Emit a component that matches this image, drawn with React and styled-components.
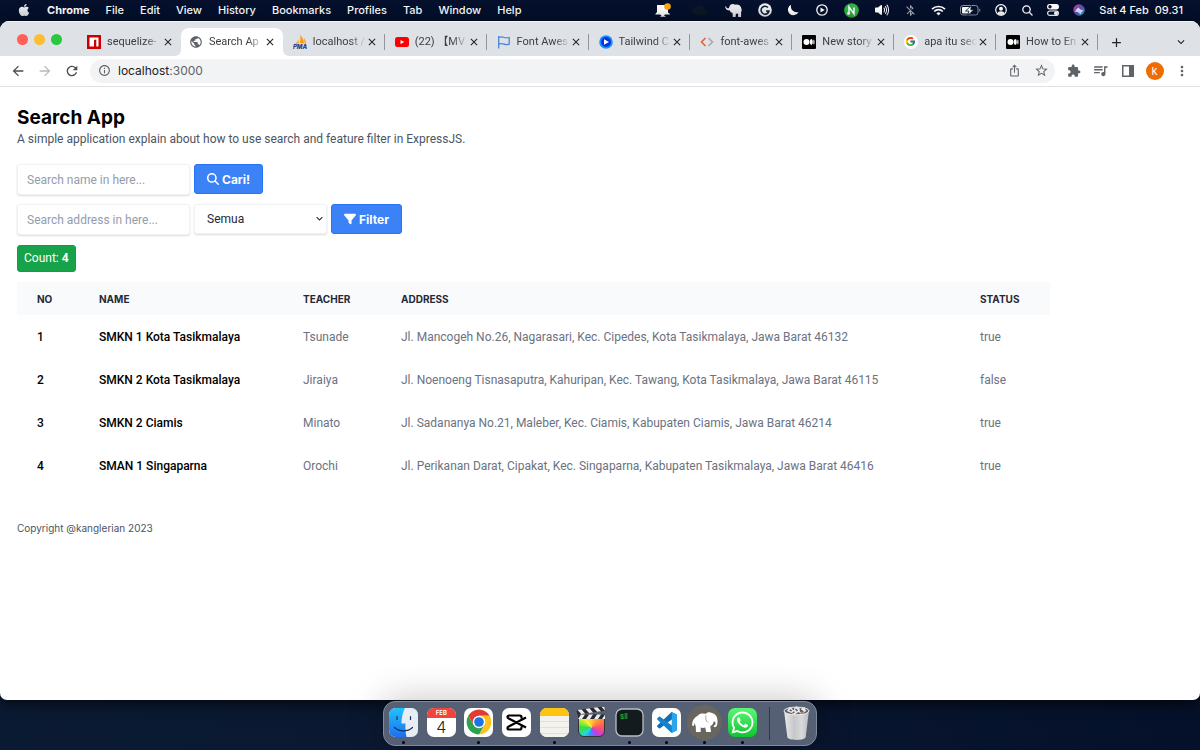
import React, { useState } from "react";
import styled, { createGlobalStyle, css } from "styled-components";
import { FaApple, FaFilter, FaMagnifyingGlass, FaWhatsapp } from "react-icons/fa6";
import { FcGoogle } from "react-icons/fc";
import { IoVolumeHigh } from "react-icons/io5";
import {
  MdAdd,
  MdArrowBack,
  MdArrowForward,
  MdBluetoothDisabled,
  MdClose,
  MdExtension,
  MdInfoOutline,
  MdIosShare,
  MdKeyboardArrowDown,
  MdMoreVert,
  MdPublic,
  MdQueueMusic,
  MdRefresh,
  MdStarBorder,
} from "react-icons/md";

const GlobalStyle = createGlobalStyle`
  * {
    box-sizing: border-box;
  }

  body {
    margin: 0;
    font-family: Inter, "Noto Sans CJK JP", sans-serif;
    font-size: 11px;
    color: #000;
  }

  button,
  input,
  select {
    font: inherit;
    margin: 0;
  }

  svg {
    display: block;
    flex: none;
  }
`;

const Desktop = styled.div`
  min-height: 100vh;
  display: flex;
  flex-direction: column;
  background: linear-gradient(90deg, #0b1a33, #0a1730 50%, #05112a);
`;

/* ---------- menu bar ---------- */

const MenuBar = styled.header`
  display: flex;
  align-items: center;
  justify-content: space-between;
  height: 21px;
  padding: 0 17px 1px 17px;
  background: #04102c;
  color: #fff;
  font-weight: 500;
`;

const Menus = styled.nav`
  display: flex;
  align-items: center;
  gap: 16px;
`;

const MenuButton = styled.button`
  padding: 0;
  border: 0;
  background: none;
  color: inherit;
  font-weight: ${(props) => (props.$bold ? 700 : 500)};
`;

const StatusArea = styled.div`
  display: flex;
  align-items: center;
  gap: 14px;
`;

const StatusItem = styled.span`
  display: flex;
  justify-content: center;
  width: ${(props) => props.$width}px;
  opacity: ${(props) => (props.$dim ? 0.6 : 1)};
`;

const Clock = styled.time`
  white-space: pre;
`;

/* ---------- browser window ---------- */

const BrowserWindow = styled.div`
  flex: 1;
  display: flex;
  flex-direction: column;
  border-radius: 9px 9px 7px 7px;
  overflow: hidden;
  background: #fff;
  box-shadow: 0 2px 16px rgba(0, 0, 0, 0.8);
`;

const TabStrip = styled.div`
  display: flex;
  align-items: stretch;
  height: 35px;
  background: #dee1e6;
  border-top: 1px solid #eff1f3;
`;

const TrafficLights = styled.div`
  display: flex;
  align-items: center;
  gap: 6px;
  width: 79px;
  padding-left: 17px;
`;

const Light = styled.button`
  width: 11px;
  height: 11px;
  padding: 0;
  border: 0;
  border-radius: 50%;
  background: ${(props) => props.$color};
`;

const TabList = styled.div`
  flex: 1;
  min-width: 0;
  display: grid;
  grid-template-columns: repeat(10, minmax(0, 1fr));
  padding-top: 6px;
`;

const activeTab = css`
  background: #fff;
  border-radius: 8px 8px 0 0;

  &::before,
  &::after {
    content: "";
    position: absolute;
    bottom: 0;
    width: 6px;
    height: 6px;
  }

  &::before {
    left: -6px;
    background: radial-gradient(circle at 0 0, transparent 6px, #fff 6px);
  }

  &::after {
    right: -6px;
    background: radial-gradient(circle at 100% 0, transparent 6px, #fff 6px);
  }
`;

const TabItem = styled.div`
  position: relative;
  display: flex;
  align-items: center;
  padding: 0 8px 0 ${(props) => (props.$divided ? 10 : 8)}px;
  color: #3c4043;
  ${(props) => props.$active && activeTab}
`;

const TabTitle = styled.span`
  flex: 1;
  min-width: 0;
  margin: 0 1px 0 6px;
  overflow: hidden;
  white-space: pre;
  font-family: Roboto, "Noto Sans CJK JP", sans-serif;
  line-height: 16px;
  mask-image: linear-gradient(90deg, #000 70%, transparent);
`;

const TabDivider = styled.span`
  position: absolute;
  right: 0;
  top: 6px;
  width: 1px;
  height: 16px;
  background: #92959a;
`;

const IconButton = styled.button`
  display: flex;
  align-items: center;
  justify-content: center;
  padding: 0;
  border: 0;
  background: none;
  color: ${(props) => props.$color || "#202124"};
  width: ${(props) => props.$width || 10}px;
`;

const StripEnd = styled.div`
  display: flex;
  align-items: center;
  justify-content: space-between;
  width: 102px;
  padding: 6px 12px 0 11px;
`;

const Toolbar = styled.div`
  display: flex;
  align-items: center;
  height: 31px;
  padding: 0 5px 1px 4px;
  border-bottom: 1px solid #dfe1e4;
`;

const AddressBar = styled.div`
  flex: 1;
  display: flex;
  align-items: center;
  gap: 7px;
  height: 24px;
  margin: 0 5px;
  padding: 0 4px 0 8px;
  border-radius: 12px;
  background: #f1f3f4;
  color: #5f6368;
`;

const Address = styled.span`
  flex: 1;
  font-size: 12px;
  color: #5f6368;

  b {
    color: #202124;
    font-weight: 400;
  }
`;

const Avatar = styled.span`
  display: flex;
  align-items: center;
  justify-content: center;
  width: 18px;
  height: 18px;
  border-radius: 50%;
  background: #ef6c00;
  color: #fff;
`;

/* ---------- page ---------- */

const Page = styled.main`
  padding: 17px;
  font-family: Roboto, sans-serif;
  font-size: 12px;
`;

const Title = styled.h1`
  margin: 0;
  font-family: Inter, sans-serif;
  font-size: 19px;
  line-height: 27px;
  font-weight: 700;
`;

const Subtitle = styled.p`
  margin: 0 0 17px;
  line-height: 16px;
  color: #4b5563;
`;

const FormRow = styled.form`
  display: flex;
  align-items: flex-start;
  gap: 4px;
  margin-bottom: 9px;
`;

const field = css`
  border: 1px solid #f1f2f4;
  border-radius: 3px;
  background: #fff;
  box-shadow: 0 1px 2px rgba(0, 0, 0, 0.14);
`;

const TextField = styled.input`
  ${field}
  width: 173px;
  height: 31px;
  padding: 0 9px;

  &::placeholder {
    color: #949cab;
    opacity: 1;
  }
`;

const SelectBox = styled.div`
  position: relative;
  width: 133px;

  svg {
    position: absolute;
    right: 1px;
    top: 8px;
    pointer-events: none;
  }
`;

const Select = styled.select`
  ${field}
  appearance: none;
  width: 100%;
  height: 30px;
  padding: 0 12px;
  color: #1f2937;
`;

const SubmitButton = styled.button`
  display: flex;
  align-items: center;
  gap: 3px;
  height: 30px;
  padding: 0 12px;
  border: 1px solid #2674f5;
  border-radius: 3px;
  background: #3b82f6;
  color: #fff;
  font-family: Inter, sans-serif;
  font-weight: 700;
`;

const CountBadge = styled.p`
  width: fit-content;
  margin: 10px 0;
  padding: 0 6px;
  border: 1px solid #159c48;
  border-radius: 3px;
  background: #16a34a;
  color: #fff;
  line-height: 25px;
`;

const TableWrap = styled.div`
  margin-right: 133px;
`;

const Table = styled.table`
  width: 100%;
  table-layout: fixed;
  border-collapse: collapse;
  text-align: left;
  color: #6b7280;

  tr {
    height: 43px;
  }

  thead tr {
    height: 33px;
    background: #f9fafb;
  }
`;

const HeadCell = styled.th`
  width: ${(props) => (props.$width ? `${props.$width}px` : "auto")};
  padding: 0 20px;
  font-family: Inter, sans-serif;
  font-size: 10px;
  font-weight: 700;
  color: #1f2937;
`;

const Cell = styled.td`
  padding: 0 20px;
  white-space: nowrap;
`;

const StrongCell = styled(Cell)`
  font-weight: 500;
  color: #000;
`;

const Footer = styled.footer`
  margin-top: 33px;
  font-family: Inter, sans-serif;
  font-size: 10px;
  line-height: 16px;
  color: #4b5563;
`;

/* ---------- dock ---------- */

const DockArea = styled.footer`
  position: relative;
  display: flex;
  justify-content: center;
  padding: 1px 0 4px;
`;

const Dock = styled.div`
  display: flex;
  align-items: center;
  width: 434px;
  height: 45px;
  padding: 0 1px;
  border: 1px solid #828b9c;
  border-radius: 12px;
  background: #566075;
  box-shadow: 0 0 36px rgba(0, 0, 0, 0.25), 0 0 1px #000;
`;

const DockApps = styled.div`
  flex: 1;
  display: grid;
  grid-template-columns: repeat(10, 1fr);
`;

const DockItem = styled.button`
  display: flex;
  flex-direction: column;
  align-items: center;
  gap: 3px;
  padding: 3px 0 0;
  border: 0;
  background: none;
`;

const RunningDot = styled.span`
  width: 3px;
  height: 3px;
  border-radius: 50%;
  background: ${(props) => (props.$on ? "#000" : "transparent")};
`;

const DockSeparator = styled.span`
  width: 1px;
  height: 33px;
  margin: 0 8px;
  background: #2f3848;
`;

const IconSlot = styled.span`
  display: flex;
  align-items: center;
  justify-content: center;
  width: 37px;
  height: 32px;
`;

const Tile = styled.span`
  position: relative;
  display: flex;
  flex-direction: column;
  align-items: center;
  justify-content: center;
  width: 29px;
  height: 29px;
  border-radius: 7px;
  overflow: hidden;
  background: ${(props) => props.$background || "#fff"};
`;

const MonthLabel = styled.span`
  align-self: stretch;
  background: #f0443c;
  color: #fff;
  font-size: 6px;
  line-height: 10px;
  font-weight: 600;
  text-align: center;
`;

const DayLabel = styled.span`
  flex: 1;
  color: #222;
  font-size: 16px;
  line-height: 19px;
  font-weight: 300;
`;

const NoteTop = styled.span`
  align-self: stretch;
  height: 8px;
  background: #fcc40f;
`;

const NoteLines = styled.span`
  align-self: stretch;
  flex: 1;
  background: repeating-linear-gradient(#f4f2ed 0 5px, #e2e0db 5px 6px);
`;

const ColorWheel = styled.span`
  width: 27px;
  height: 19px;
  margin-top: 10px;
  border: 1px solid #333;
  border-radius: 1px 1px 6px 6px;
  background: conic-gradient(#ffc83c, #ff8a3c 50deg, #ff4f6b 90deg, #c03cf0 140deg, #3c8cff 190deg, #28d8d8 225deg, #33e03c 270deg, #f4f03c 320deg, #ffc83c);
`;

/* ---------- drawings ---------- */

const NpmIcon = () => (
  <svg width="14" height="14" viewBox="0 0 14 14">
    <path fill="#cb0000" d="M0 0h14v14H0z" />
    <path fill="#fff" d="M2.5 2.5h9v9H9.3V4.8H7v6.7H2.5z" />
  </svg>
);

const PmaIcon = () => (
  <svg width="14" height="14" viewBox="0 0 14 14">
    <path fill="#f89c0e" d="M5.4 1.5c.6 3-.8 6-3.7 7.7l3.8-.7zM7 0c3 2.7 4 5.6 4 8.6L6.600 8C7.700 5 7.700 2.500 7 0zM11 3c1.400 1.600 2 3.600 2 5.800l-1.400-.2z" />
    <text x="7" y="14" textAnchor="middle" fontSize="6" fontWeight="800" fontStyle="italic" fill="#34347c">
      PMA
    </text>
  </svg>
);

const YoutubeIcon = () => (
  <svg width="14" height="14" viewBox="0 0 14 14">
    <rect y="2" width="14" height="10" rx="2.5" fill="#f00" />
    <path fill="#fff" d="M5.500 4.900v4.200L9.300 7z" />
  </svg>
);

const FlagIcon = () => (
  <svg width="14" height="14" viewBox="0 0 14 14" fill="none" stroke="#4a86dd" strokeWidth="1.300">
    <path d="M1.700 1v12.500M1.700 2.500c2-1 3.800-.7 5.500 0s3 .6 5 0v6.700c-2 .7-3.300.7-5 0s-3.500-1-5.500 0" />
  </svg>
);

const PlayIcon = () => (
  <svg width="14" height="14" viewBox="0 0 14 14">
    <circle cx="7" cy="7" r="6.800" fill="#1593ff" />
    <circle cx="7" cy="7" r="5" fill="#0635e0" />
    <path fill="#fff" d="M5 4.200v5.600L10 7z" />
  </svg>
);

const CodeIcon = () => (
  <svg width="14" height="14" viewBox="0 0 14 14" fill="none" strokeWidth="1.500">
    <path stroke="#ea5b2c" d="M5.500 3 1.500 7l4 4" />
    <path stroke="#a4a6a9" d="m8.500 3 4 4-4 4" />
  </svg>
);

const MediumIcon = () => (
  <svg width="14" height="14" viewBox="0 0 14 14">
    <rect width="14" height="14" rx="1" />
    <circle cx="4.500" cy="7" r="3" fill="#fff" />
    <ellipse cx="9.300" cy="7" rx="1.500" ry="2.900" fill="#fff" />
    <ellipse cx="11.900" cy="7" rx=".6" ry="2.600" fill="#fff" />
  </svg>
);

const GoogleIcon = () => (
  <svg width="14" height="14" viewBox="0 0 14 14">
    <circle cx="7" cy="7" r="7" fill="#fff" />
    <FcGoogle x="1" y="1" width="12" height="12" />
  </svg>
);

const Elephant = () => (
  <svg width="27" height="24" viewBox="0 0 27 24" fill="currentColor">
    <path d="M7 4.500C8.500 2.500 11.500 2 14.500 3c1.500-2 4.500-2.500 6.500-1 3 .5 4.700 2.800 5.200 5.500.6 2.700.4 5.500-.4 7.300-.6 1.500-2.300 1.800-3.300.6l.8-1.300c.9.4 1.300-.6 1.200-2.500-.5-1-1-1.200-1.800-1-.5 2.800-1.700 4-3.400 4.300l.7 6.100h-4.800l-1-4.500c-1.500.5-3 .5-4.500 0L9.700 21H5l-.3-6c-.7-1-.8-2-.8-3.500L2.700 15 1 14.500c0-4.500 2-8 6-10z" />
    <path d="M15 4.500c-.8 3 0 5.500 2 7" fill="none" stroke="#68665f" strokeWidth=".6" />
  </svg>
);

const MenuElephant = () => (
  <svg width="18" height="15" viewBox="0 0 18 15" fill="#e8e9ec">
    <path d="M1 3.200c.4 1.700 1.400 2.500 2.800 2L5 2.300C6.500.8 8.700.7 10 1.700c3.500-.5 6 1 6.500 4.300l.3 2.200-.7.300V14h-3v-3.500c-.8.3-1.500.3-2.200.2l-.3 3.300H7.800L7.500 10C5.900 9.700 5 8.800 4.700 7.300 2 7.800.3 6.200.2 3.500z" />
  </svg>
);

const ChatIcon = () => (
  <svg width="18" height="15" viewBox="0 0 18 15" fill="#fff">
    <path d="M3 2h11v7.500l2.500 2H11l-1 1 2 1.300H6l1.500-1.300L6 11.500H1L3 9z" />
    <circle cx="13.500" cy="3.500" r="3.300" fill="#ffa70f" />
  </svg>
);

const FaintCloud = () => (
  <svg width="16" height="12" viewBox="0 0 16 12" fill="#0c1727">
    <path d="M5 11a4 4 0 0 1 0-8 5 5 0 0 1 9 3 2.500 2.500 0 0 1 0 5z" />
  </svg>
);

const GrammarlyIcon = () => (
  <svg width="14" height="14" viewBox="0 0 14 14">
    <circle cx="7" cy="7" r="6.800" fill="#edeef1" />
    <path d="M10 4.500A4 4 0 1 0 11 8H8m1.500 2L11 8" fill="none" stroke="#111d38" strokeWidth="1.500" />
  </svg>
);

const MoonIcon = () => (
  <svg width="12" height="12" viewBox="0 0 12 12">
    <path fill="#fff" d="M4.200.7a5.500 5.500 0 1 0 7.300 7.200A5.700 5.700 0 0 1 4.200.7" />
  </svg>
);

const CirclePlay = () => (
  <svg width="12" height="12" viewBox="0 0 12 12">
    <circle cx="6" cy="6" r="5.200" fill="none" stroke="#fff" strokeWidth="1.300" />
    <path fill="#fff" d="M4.500 3.500v5L8.700 6z" />
  </svg>
);

const GreenNote = () => (
  <svg width="15" height="15" viewBox="0 0 15 15">
    <circle cx="7.500" cy="7.500" r="7.300" fill="#2fb344" />
    <path fill="none" stroke="#fff" strokeWidth="1.500" d="M5 10.500V4l5 7V4.500" />
    <circle cx="4.500" cy="10.500" r="1.400" fill="#fff" />
  </svg>
);

const WifiIcon = () => (
  <svg width="15" height="11" viewBox="0 0 15 11" fill="none" stroke="#fff" strokeWidth="1.700">
    <path d="M1 4.200a9.200 9.200 0 0 1 13 0M3.200 6.500a6 6 0 0 1 8.600 0" />
    <path d="M7.500 10.500 5.400 8.400a3 3 0 0 1 4.200 0z" fill="#fff" stroke="none" />
  </svg>
);

const BatteryIcon = () => (
  <svg width="21" height="11" viewBox="0 0 21 11">
    <rect x=".5" y=".5" width="17.500" height="9.500" rx="2.500" fill="none" stroke="#8a92a3" />
    <rect x="2" y="2" width="9" height="6.500" rx="1" fill="#fff" />
    <path d="M11.500.5 5.500 6h3.300l-1 4.300L14 4.800h-3.300z" fill="#fff" stroke="#04102c" strokeWidth=".8" />
    <path d="M19.300 3.500v3.600c1.500-.6 1.500-3 0-3.600" fill="#8a92a3" />
  </svg>
);

const PersonIcon = () => (
  <svg width="12" height="12" viewBox="0 0 12 12">
    <circle cx="6" cy="6" r="5.300" fill="none" stroke="#fff" strokeWidth="1.200" />
    <circle cx="6" cy="4.700" r="2" fill="#fff" />
    <path d="M2.300 9.500c1-3 6.400-3 7.400 0-2 2-5.400 2-7.400 0" fill="#fff" />
  </svg>
);

const SearchGlass = () => (
  <svg width="11" height="11" viewBox="0 0 11 11" fill="none" stroke="#fff" strokeWidth="1.300">
    <circle cx="4.500" cy="4.500" r="3.700" />
    <path d="m7.300 7.300 3.200 3.200" />
  </svg>
);

const TogglesIcon = () => (
  <svg width="12" height="12" viewBox="0 0 12 12">
    <rect width="12" height="5.500" rx="2.750" fill="#fff" />
    <circle cx="3" cy="2.750" r="1.700" fill="#04102c" />
    <rect x=".6" y="7" width="10.800" height="4.400" rx="2.200" fill="none" stroke="#fff" strokeWidth="1.200" />
    <circle cx="9" cy="9.200" r="2" fill="#fff" />
  </svg>
);

const SiriIcon = () => (
  <svg width="12" height="12" viewBox="0 0 12 12">
    <defs>
      <linearGradient id="siri" x1="0" y1="0" x2="1" y2="1">
        <stop offset="0" stopColor="#e03c80" />
        <stop offset=".5" stopColor="#5a4bb8" />
        <stop offset="1" stopColor="#2bb8d8" />
      </linearGradient>
    </defs>
    <circle cx="6" cy="6" r="5.700" fill="url(#siri)" />
    <path d="M1.500 7.500C3 6 4 4.500 5.500 3.500 6.500 5 8 6 10.500 6.500 9 7.500 8 9 7.500 10.500 6 8.500 4 7.800 1.500 7.500" fill="#cfe0ff" />
  </svg>
);

const SidePanelIcon = () => (
  <svg width="12" height="12" viewBox="0 0 12 12" fill="#5f6368">
    <path d="M0 0h12v12H0zM1.500 1.500v9H7v-9z" fillRule="evenodd" />
  </svg>
);

const FinderIcon = () => (
  <svg width="29" height="29" viewBox="0 0 29 29">
    <defs>
      <linearGradient id="finder" x2="0" y2="1">
        <stop offset="0" stopColor="#1fc3fb" />
        <stop offset="1" stopColor="#1d6ff0" />
      </linearGradient>
    </defs>
    <path fill="url(#finder)" d="M0 0h29v29H0z" />
    <path fill="#e8edf4" d="M16 0c-2.500 5-3.500 9.500-3.500 15.500h4c-.2 5 0 9 1 13.500H29V0z" />
    <path d="M8 8.500v3M21.500 8.500v3M5.500 19.500c5 4.500 13 4.500 18 0" fill="none" stroke="#173350" strokeWidth="1.200" strokeLinecap="round" />
  </svg>
);

const ChromeIcon = () => (
  <svg width="26" height="26" viewBox="3 3 42 42">
    <path fill="#e33b2e" d="M6.680 14A20 20 0 0 1 41.320 14H24L15.340 29z" />
    <path fill="#fcc31e" d="M41.320 14A20 20 0 0 1 24 44L32.660 29 24 14z" />
    <path fill="#2da14c" d="M24 44A20 20 0 0 1 6.680 14L15.340 29H32.660z" />
    <circle cx="24" cy="24" r="10" fill="#fff" />
    <circle cx="24" cy="24" r="7.800" fill="#1b73e8" />
  </svg>
);

const CapcutIcon = () => (
  <svg width="21" height="17" viewBox="0 0 21 17" fill="none" stroke="#000" strokeWidth="2.200" strokeLinejoin="round">
    <path d="M15.500 4.500V3.200c0-1-.5-1.700-1.700-1.700H3.200c-1.200 0-1.700.6-1.700 1.500 0 .8.500 1.200 1.200 1.500L20 13.500M15.500 12.500v1.300c0 1-.5 1.700-1.700 1.700H3.200c-1.200 0-1.700-.6-1.700-1.500 0-.8.500-1.200 1.200-1.500L20 3.500" />
  </svg>
);

const FinalCutIcon = () => (
  <svg width="31" height="13" viewBox="0 0 31 13">
    <g transform="rotate(-8 2 6)">
      <path d="M1 3h28v4.500H1z" fill="#2a2a2c" />
      <path fill="#ececec" d="m2 3 3 4.500h4L6 3zM10 3l3 4.500h4L14 3zM18 3l3 4.500h4L22 3zM26 3l3 4.500V3z" />
    </g>
    <path d="M2 7.500h27V12H2z" fill="#2a2a2c" />
    <path fill="#ececec" d="M5 7.500h4L6 12H2zM13 7.500h4L14 12h-4zM21 7.500h4L22 12h-4zM29 7.500V12h-3z" />
  </svg>
);

const FinalCutSlot = styled.span`
  position: relative;
  display: flex;
  justify-content: center;
  width: 31px;
  height: 29px;

  svg {
    position: absolute;
    top: -1px;
    left: 0;
  }
`;

const TerminalIcon = () => (
  <svg width="29" height="29" viewBox="0 0 29 29">
    <rect x="1" y="1" width="27" height="27" rx="6" fill="#141b1e" stroke="#b9bec4" strokeWidth="1.300" />
    <text x="5" y="11" fontSize="7" fontWeight="700" fontFamily="Liberation Mono, monospace" fill="#22a73a">
      $
    </text>
    <path fill="#157a2a" d="M9.500 5h3v6h-3z" />
  </svg>
);

const VsCodeIcon = () => (
  <svg width="21" height="21" viewBox="0 0 100 100">
    <path fill="#0f6fb8" d="M74 0 96 11c3 1 4 4 4 6L20 77c-2 2-4 2-6 0l-8-7c-2-2-2-4 0-6z" />
    <path fill="#1482cf" d="M74 100 6 36c-2-2-2-4 0-6l8-7c2-2 4-2 6 0l80 60c0 3-1 5-4 6z" />
    <path fill="#2ba5ec" d="M74 0 96 11c3 1 4 4 4 7v64c0 3-1 6-4 7L74 100c-1 0-1-1 1-4V4z" />
  </svg>
);

const MampIcon = styled.span`
  display: flex;
  align-items: center;
  justify-content: center;
  width: 35px;
  height: 35px;
  margin: -1px 0 -2px;
  border-radius: 50%;
  background: #68665f;
  color: #fff;
`;

const TrashIcon = () => (
  <svg width="27" height="35" viewBox="0 0 28 36">
    <defs>
      <linearGradient id="bin">
        <stop offset="0" stopColor="#ececec" />
        <stop offset=".4" stopColor="#c6c7c9" />
        <stop offset=".7" stopColor="#d8d9da" />
        <stop offset="1" stopColor="#b9bcc0" />
      </linearGradient>
    </defs>
    <path fill="url(#bin)" d="M1 4h26l-3.500 28c-.5 4-18.500 4-19 0z" />
    <ellipse cx="14" cy="5" rx="13" ry="4" fill="#60656c" stroke="#f6f6f6" />
    <path fill="#e9e9e9" d="m4 5 3-4 4 2 3-3 4 3 4-2 2 4-5 3-3-2-4 3-3-2z" />
    <path d="m7 4 2 1m4-2 2 2m5-1-2 2" stroke="#3a5f85" strokeWidth="1.500" />
    <path d="m10 7 2-1m7 1 2-2M10 2l1 2m7-1v2" stroke="#8a4a2c" strokeWidth="1.300" />
  </svg>
);

/* ---------- data ---------- */

const menus = ["Chrome", "File", "Edit", "View", "History", "Bookmarks", "Profiles", "Tab", "Window", "Help"];

const statusItems = [
  { name: "chat", width: 18, icon: <ChatIcon /> },
  { name: "cloud", width: 25, icon: <FaintCloud /> },
  { name: "mamp", width: 18, icon: <MenuElephant /> },
  { name: "grammarly", width: 15, icon: <GrammarlyIcon /> },
  { name: "focus", width: 14, icon: <MoonIcon /> },
  { name: "play", width: 15, icon: <CirclePlay /> },
  { name: "notes", width: 16, icon: <GreenNote /> },
  { name: "volume", width: 17, icon: <IoVolumeHigh size={16} /> },
  { name: "bluetooth", width: 12, icon: <MdBluetoothDisabled size={13} />, dim: true },
  { name: "wifi", width: 16, icon: <WifiIcon /> },
  { name: "battery", width: 21, icon: <BatteryIcon /> },
  { name: "user", width: 12, icon: <PersonIcon /> },
  { name: "search", width: 12, icon: <SearchGlass /> },
  { name: "control", width: 12, icon: <TogglesIcon /> },
  { name: "siri", width: 12, icon: <SiriIcon /> },
];

const tabs = [
  { title: "sequelize-", icon: <NpmIcon /> },
  { title: "Search Ap", icon: <MdPublic size={14} color="#5f6368" />, active: true },
  { title: "localhost /", icon: <PmaIcon /> },
  { title: "(22) 【MV", icon: <YoutubeIcon /> },
  { title: "Font Awes", icon: <FlagIcon /> },
  { title: "Tailwind C", icon: <PlayIcon /> },
  { title: "font-awes", icon: <CodeIcon /> },
  { title: "New story", icon: <MediumIcon /> },
  { title: "apa itu sec", icon: <GoogleIcon /> },
  { title: "How to En", icon: <MediumIcon /> },
];

const schools = [
  {
    name: "SMKN 1 Kota Tasikmalaya",
    teacher: "Tsunade",
    address: "Jl. Mancogeh No.26, Nagarasari, Kec. Cipedes, Kota Tasikmalaya, Jawa Barat 46132",
    status: true,
  },
  {
    name: "SMKN 2 Kota Tasikmalaya",
    teacher: "Jiraiya",
    address: "Jl. Noenoeng Tisnasaputra, Kahuripan, Kec. Tawang, Kota Tasikmalaya, Jawa Barat 46115",
    status: false,
  },
  {
    name: "SMKN 2 Ciamis",
    teacher: "Minato",
    address: "Jl. Sadananya No.21, Maleber, Kec. Ciamis, Kabupaten Ciamis, Jawa Barat 46214",
    status: true,
  },
  {
    name: "SMAN 1 Singaparna",
    teacher: "Orochi",
    address: "Jl. Perikanan Darat, Cipakat, Kec. Singaparna, Kabupaten Tasikmalaya, Jawa Barat 46416",
    status: true,
  },
];

const dockApps = [
  { name: "Finder", running: true, icon: <Tile><FinderIcon /></Tile> },
  {
    name: "Calendar",
    icon: (
      <Tile>
        <MonthLabel>FEB</MonthLabel>
        <DayLabel>4</DayLabel>
      </Tile>
    ),
  },
  { name: "Chrome", running: true, icon: <Tile><ChromeIcon /></Tile> },
  { name: "CapCut", icon: <Tile><CapcutIcon /></Tile> },
  {
    name: "Notes",
    running: true,
    icon: (
      <Tile>
        <NoteTop />
        <NoteLines />
      </Tile>
    ),
  },
  {
    name: "Final Cut Pro",
    icon: (
      <FinalCutSlot>
        <ColorWheel />
        <FinalCutIcon />
      </FinalCutSlot>
    ),
  },
  { name: "Terminal", running: true, icon: <TerminalIcon /> },
  { name: "Visual Studio Code", running: true, icon: <Tile><VsCodeIcon /></Tile> },
  {
    name: "MAMP",
    running: true,
    icon: (
      <MampIcon>
        <Elephant />
      </MampIcon>
    ),
  },
  {
    name: "WhatsApp",
    running: true,
    icon: (
      <Tile $background="linear-gradient(#5df777, #0fc42f)">
        <FaWhatsapp size={25} color="#fff" />
      </Tile>
    ),
  },
];

function SystemMenuBar() {
  return (
    <MenuBar>
      <Menus>
        <FaApple size={14} color="#e6e8ec" />
        {menus.map((menu, i) => (
          <MenuButton key={menu} $bold={i === 0}>
            {menu}
          </MenuButton>
        ))}
      </Menus>
      <StatusArea>
        {statusItems.map((item) => (
          <StatusItem key={item.name} $width={item.width} $dim={item.dim}>
            {item.icon}
          </StatusItem>
        ))}
        <Clock>Sat 4 Feb  09.31</Clock>
      </StatusArea>
    </MenuBar>
  );
}

function BrowserTabs() {
  return (
    <TabStrip>
      <TrafficLights>
        <Light $color="#ff5f57" aria-label="Close window" />
        <Light $color="#febc2e" aria-label="Minimize window" />
        <Light $color="#28c840" aria-label="Zoom window" />
      </TrafficLights>
      <TabList>
        {tabs.map((tab, i) => (
          <TabItem key={i} $active={tab.active} $divided={i > 1}>
            {tab.icon}
            <TabTitle>{tab.title}</TabTitle>
            <IconButton aria-label="Close tab">
              <MdClose size={12} />
            </IconButton>
            {i > 1 ? <TabDivider /> : null}
          </TabItem>
        ))}
      </TabList>
      <StripEnd>
        <IconButton $width={14} aria-label="New tab">
          <MdAdd size={15} />
        </IconButton>
        <IconButton $width={14} aria-label="Search tabs">
          <MdKeyboardArrowDown size={14} />
        </IconButton>
      </StripEnd>
    </TabStrip>
  );
}

function BrowserToolbar() {
  return (
    <Toolbar>
      <IconButton $width={27} $color="#4a4d51" aria-label="Back">
        <MdArrowBack size={16} />
      </IconButton>
      <IconButton $width={27} $color="#b8babd" aria-label="Forward">
        <MdArrowForward size={16} />
      </IconButton>
      <IconButton $width={27} $color="#4a4d51" aria-label="Reload">
        <MdRefresh size={16} />
      </IconButton>
      <AddressBar>
        <MdInfoOutline size={13} />
        <Address>
          <b>localhost</b>:3000
        </Address>
        <IconButton $width={20} $color="#5f6368" aria-label="Share">
          <MdIosShare size={13} />
        </IconButton>
        <IconButton $width={20} $color="#5f6368" aria-label="Bookmark">
          <MdStarBorder size={15} />
        </IconButton>
      </AddressBar>
      <IconButton $width={27} $color="#5f6368" aria-label="Extensions">
        <MdExtension size={14} />
      </IconButton>
      <IconButton $width={27} $color="#5f6368" aria-label="Media">
        <MdQueueMusic size={17} />
      </IconButton>
      <IconButton $width={27} aria-label="Side panel">
        <SidePanelIcon />
      </IconButton>
      <IconButton $width={27} aria-label="Profile">
        <Avatar>k</Avatar>
      </IconButton>
      <IconButton $width={27} $color="#5f6368" aria-label="More">
        <MdMoreVert size={16} />
      </IconButton>
    </Toolbar>
  );
}

function SearchPage() {
  const [name, setName] = useState("");
  const [address, setAddress] = useState("");

  function handleSubmit(e) {
    e.preventDefault();
  }

  return (
    <Page>
      <Title>Search App</Title>
      <Subtitle>
        A simple application explain about how to use search and feature filter in ExpressJS.
      </Subtitle>
      <FormRow onSubmit={handleSubmit}>
        <TextField
          aria-label="Name"
          placeholder="Search name in here..."
          value={name}
          onChange={(e) => setName(e.target.value)}
        />
        <SubmitButton>
          <FaMagnifyingGlass size={12} />
          Cari!
        </SubmitButton>
      </FormRow>
      <FormRow onSubmit={handleSubmit}>
        <TextField
          aria-label="Address"
          placeholder="Search address in here..."
          value={address}
          onChange={(e) => setAddress(e.target.value)}
        />
        <SelectBox>
          <Select aria-label="Status">
            <option>Semua</option>
          </Select>
          <MdKeyboardArrowDown size={13} color="#1f2937" />
        </SelectBox>
        <SubmitButton>
          <FaFilter size={12} />
          Filter
        </SubmitButton>
      </FormRow>
      <CountBadge>
        Count: <b>{schools.length}</b>
      </CountBadge>
      <TableWrap>
        <Table>
          <thead>
            <tr>
              <HeadCell $width={62}>NO</HeadCell>
              <HeadCell $width={204}>NAME</HeadCell>
              <HeadCell $width={98}>TEACHER</HeadCell>
              <HeadCell>ADDRESS</HeadCell>
              <HeadCell $width={90}>STATUS</HeadCell>
            </tr>
          </thead>
          <tbody>
            {schools.map((school, i) => (
              <tr key={school.name}>
                <StrongCell>{i + 1}</StrongCell>
                <StrongCell>{school.name}</StrongCell>
                <Cell>{school.teacher}</Cell>
                <Cell>{school.address}</Cell>
                <Cell>{String(school.status)}</Cell>
              </tr>
            ))}
          </tbody>
        </Table>
      </TableWrap>
      <Footer>Copyright @kanglerian 2023</Footer>
    </Page>
  );
}

export default function App() {
  return (
    <Desktop>
      <GlobalStyle />
      <SystemMenuBar />
      <BrowserWindow>
        <BrowserTabs />
        <BrowserToolbar />
        <SearchPage />
      </BrowserWindow>
      <DockArea>
        <Dock>
          <DockApps>
            {dockApps.map((app) => (
              <DockItem key={app.name} aria-label={app.name}>
                <IconSlot>{app.icon}</IconSlot>
                <RunningDot $on={app.running} />
              </DockItem>
            ))}
          </DockApps>
          <DockSeparator />
          <IconSlot>
            <TrashIcon />
          </IconSlot>
        </Dock>
      </DockArea>
    </Desktop>
  );
}
